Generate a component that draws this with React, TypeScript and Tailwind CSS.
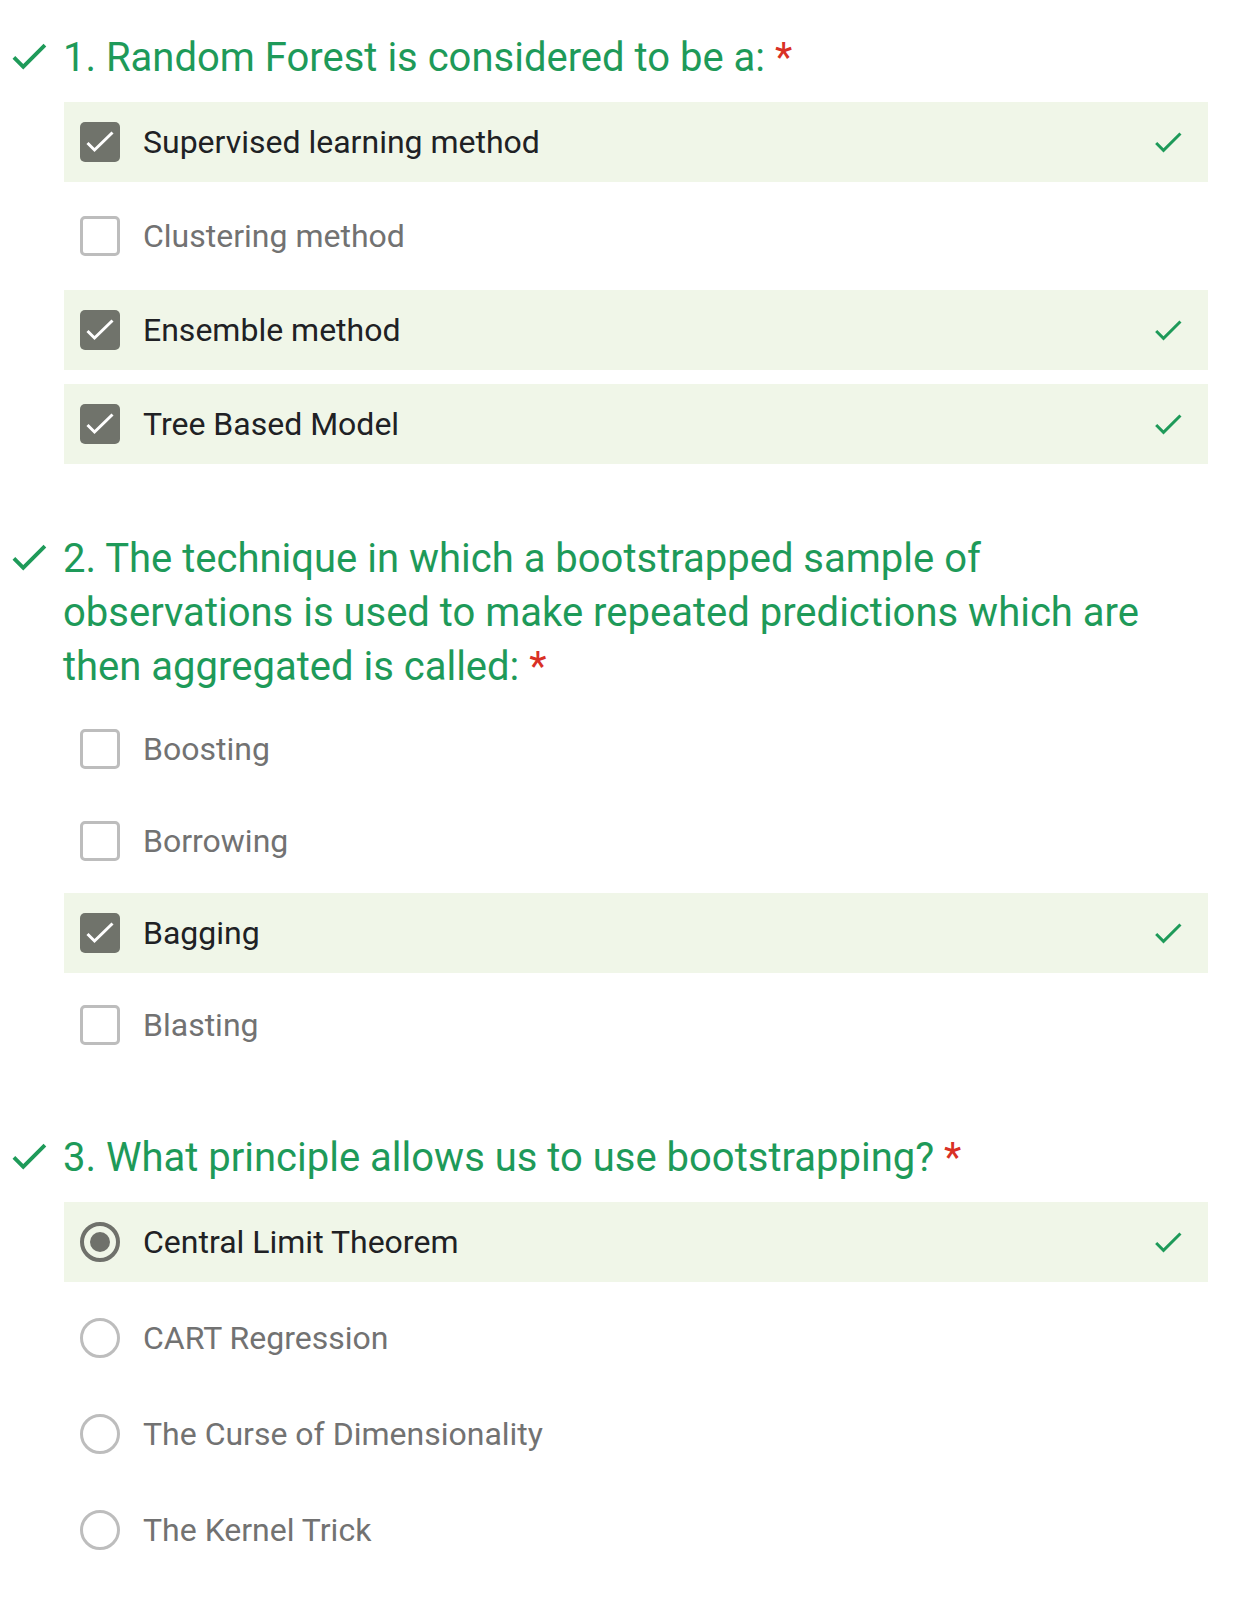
import React from 'react';

type Option = {
    label: string;
    checked: boolean;
};

type Question = {
    id: number;
    title: string;
    kind: 'checkbox' | 'radio';
    options: Option[];
    wrapClass: string;
    listClass: string;
};

const questions: Question[] = [
    {
        id: 1,
        title: '1. Random Forest is considered to be a:',
        kind: 'checkbox',
        wrapClass: 'pt-[31px]',
        listClass: 'mt-[17px] gap-[14px]',
        options: [
            { label: 'Supervised learning method', checked: true },
            { label: 'Clustering method', checked: false },
            { label: 'Ensemble method', checked: true },
            { label: 'Tree Based Model', checked: true },
        ],
    },
    {
        id: 2,
        title: '2. The technique in which a bootstrapped sample of observations is used to make repeated predictions which are then aggregated is called:',
        kind: 'checkbox',
        wrapClass: 'pt-[68px]',
        listClass: 'mt-[15px] gap-[12px]',
        options: [
            { label: 'Boosting', checked: false },
            { label: 'Borrowing', checked: false },
            { label: 'Bagging', checked: true },
            { label: 'Blasting', checked: false },
        ],
    },
    {
        id: 3,
        title: '3. What principle allows us to use bootstrapping?',
        kind: 'radio',
        wrapClass: 'pt-[66px]',
        listClass: 'mt-[17px] gap-[16px]',
        options: [
            { label: 'Central Limit Theorem', checked: true },
            { label: 'CART Regression', checked: false },
            { label: 'The Curse of Dimensionality', checked: false },
            { label: 'The Kernel Trick', checked: false },
        ],
    },
];

const CHECK_PATH = 'M9 16.17L4.83 12l-1.42 1.41L9 19 21 7l-1.41-1.41z';

function CheckIcon({ className }: { className: string }) {
    return (
        <svg viewBox="0 0 24 24" className={className} fill="currentColor" aria-hidden="true">
            <path d={CHECK_PATH} />
        </svg>
    );
}

function Control({ kind, checked }: { kind: Question['kind']; checked: boolean }) {
    if (kind === 'radio') {
        return checked ? (
            <div className="w-[40px] h-[40px] shrink-0 rounded-full border-[4px] border-[#6f716b] flex items-center justify-center">
                <div className="w-[20px] h-[20px] rounded-full bg-[#6f716b]" />
            </div>
        ) : (
            <div className="w-[40px] h-[40px] shrink-0 rounded-full border-[3px] border-[#bdbdbd]" />
        );
    }

    return checked ? (
        <div className="w-[40px] h-[40px] shrink-0 rounded-[5px] bg-[#70736b] flex items-center justify-center">
            <svg viewBox="0 0 40 40" className="w-[40px] h-[40px]" aria-hidden="true">
                <polyline
                    points="7.5,21 14.5,28 32.5,10.5"
                    fill="none"
                    stroke="white"
                    strokeWidth="3"
                />
            </svg>
        </div>
    ) : (
        <div className="w-[40px] h-[40px] shrink-0 rounded-[5px] border-[3px] border-[#bdbdbd]" />
    );
}

function OptionRow({ option, kind }: { option: Option; kind: Question['kind'] }) {
    const rowClasses = option.checked
        ? 'h-[80px] flex items-center pl-[16px] pr-[22px] bg-[#f0f6e8]'
        : 'h-[80px] flex items-center pl-[16px] pr-[22px]';

    return (
        <div className={rowClasses}>
            <Control kind={kind} checked={option.checked} />
            <span
                className={
                    option.checked
                        ? 'ml-[23px] flex-1 text-[32px] leading-[40px] text-[#202124]'
                        : 'ml-[23px] flex-1 text-[32px] leading-[40px] text-[#727272]'
                }
            >
                {option.label}
            </span>
            {option.checked && <CheckIcon className="w-[36px] h-[36px] text-[#1e9a59]" />}
        </div>
    );
}

export default function App() {
    return (
        <div
            className="w-[1260px] min-h-[1610px] bg-white pl-[6px] pr-[52px]"
            style={{ fontFamily: 'Roboto, "Liberation Sans", sans-serif' }}
        >
            {questions.map((q) => (
                <div key={q.id} className={q.wrapClass}>
                    {/* Question heading */}
                    <div className="flex items-start gap-[11px]">
                        <CheckIcon className="w-[46px] h-[46px] mt-[2px] shrink-0 text-[#1e9a59]" />
                        <h2 className="flex-1 text-[40px] leading-[54px] font-normal text-[#1e9a59]">
                            {q.title} <span className="text-[#d93025]">*</span>
                        </h2>
                    </div>

                    {/* Options */}
                    <div className={`ml-[58px] flex flex-col ${q.listClass}`}>
                        {q.options.map((opt) => (
                            <OptionRow key={opt.label} option={opt} kind={q.kind} />
                        ))}
                    </div>
                </div>
            ))}
        </div>
    );
}
